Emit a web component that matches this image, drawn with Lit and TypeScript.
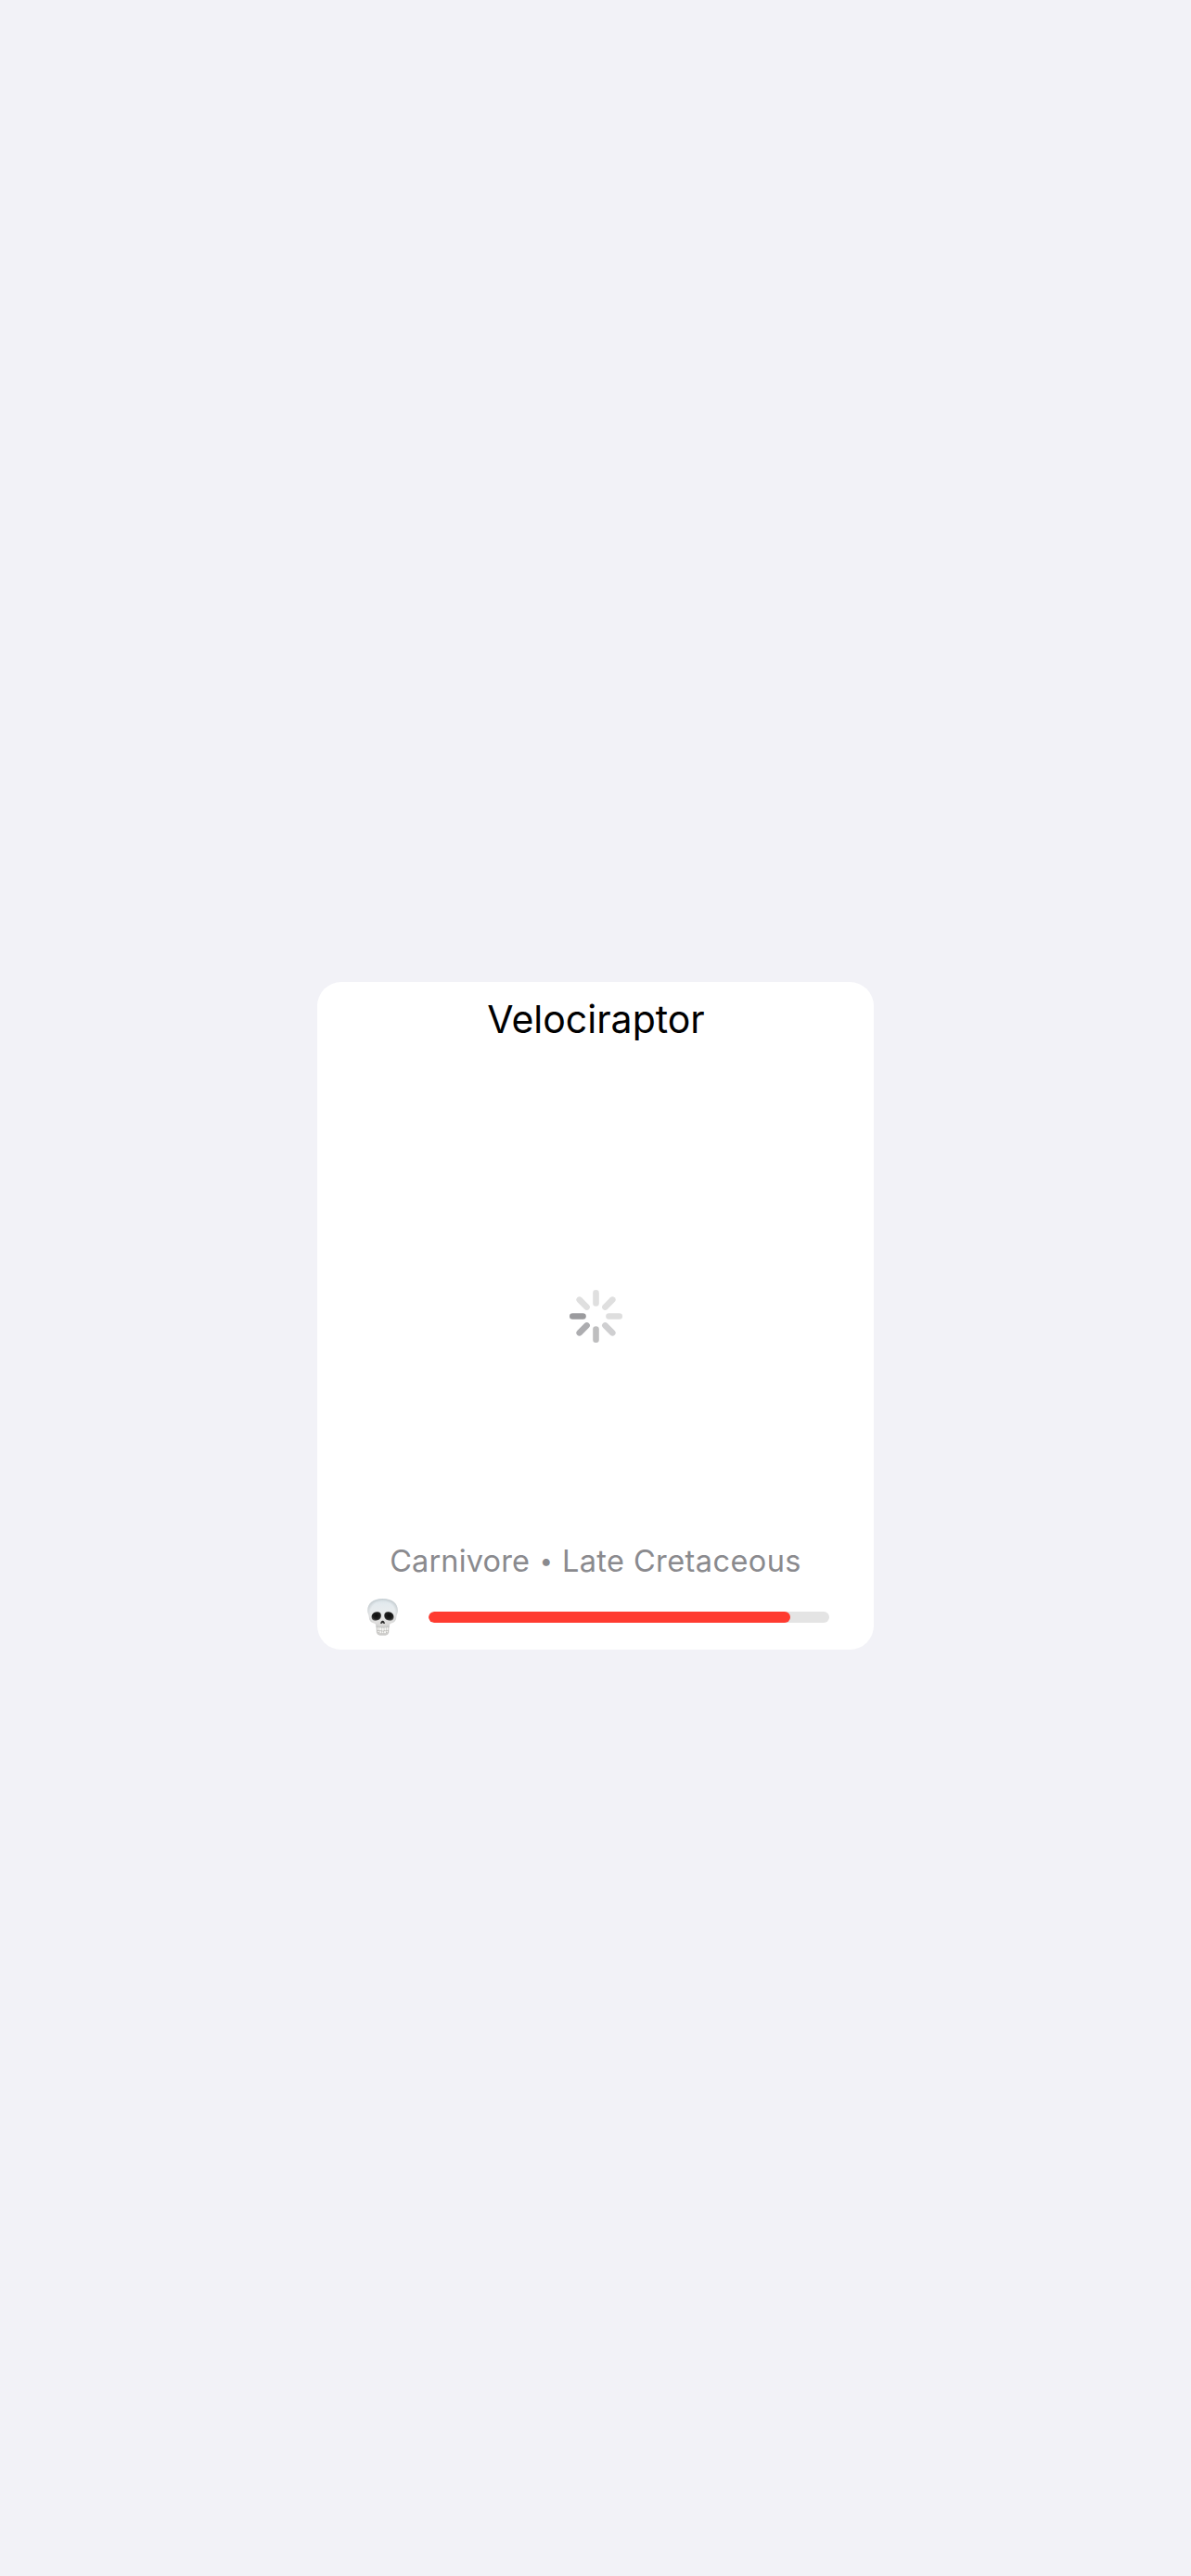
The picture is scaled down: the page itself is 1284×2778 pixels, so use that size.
import { LitElement, html, svg, css } from "lit";
import { customElement, property } from "lit/decorators.js";

@customElement("activity-spinner")
class ActivitySpinner extends LitElement {
  static styles = css`
    :host { display: block; }
    svg { display: block; width: 60px; height: 60px; }
    line { stroke-width: 6.6; stroke-linecap: round; }
  `;

  // Clockwise from twelve o'clock.
  private shades = ["#dfdfdf", "#dfdfdf", "#dedede", "#cfcfd1", "#bebebf", "#adadb0", "#9b9b9e", "#dfdfdf"];

  render() {
    return html`<svg viewBox="-30.5 -30.5 60 60" role="img" aria-label="Loading">
      ${this.shades.map(
        (shade, i) => svg`<line x1="0" y1="-14" x2="0" y2="-25.2" stroke=${shade} transform="rotate(${i * 45})"></line>`
      )}
    </svg>`;
  }
}

@customElement("skull-icon")
class SkullIcon extends LitElement {
  static styles = css`
    :host { display: block; }
    svg { display: block; width: 34px; height: 40px; }
  `;

  render() {
    return html`<svg viewBox="34.3 27 102 120" aria-hidden="true">
      <defs>
        <linearGradient id="bone" x1="0" y1="0" x2="0" y2="1">
          <stop offset="0" stop-color="#d3dde2"></stop>
          <stop offset=".16" stop-color="#e3eaee"></stop>
          <stop offset=".4" stop-color="#e8ecee"></stop>
          <stop offset=".65" stop-color="#e6e6e6"></stop>
          <stop offset="1" stop-color="#d3d2d0"></stop>
        </linearGradient>
        <radialGradient id="edge" cx=".5" cy=".5" r=".58">
          <stop offset=".7" stop-color="#9da5a9" stop-opacity="0"></stop>
          <stop offset="1" stop-color="#8e9598" stop-opacity=".5"></stop>
        </radialGradient>
        <radialGradient id="socket" cx=".5" cy=".42" r=".62">
          <stop offset="0" stop-color="#0c0c0c"></stop>
          <stop offset=".65" stop-color="#202020"></stop>
          <stop offset="1" stop-color="#6a6a6a"></stop>
        </radialGradient>
      </defs>
      <path fill="#cdccca" d="M63 113 Q84 122 105 113 L104 137 Q102 144 93 146 L75 146 Q66 144 64 137 Z"></path>
      <path fill="url(#bone)" d="M84 27 C54 27 35 42 35 65 C35 75 40 80 40 88 C40 98 47 105 58 107 C62 108 62 113 63 119 C69 124 99 124 105 119 C106 113 106 108 110 107 C121 105 128 98 128 88 C128 80 133 75 133 65 C133 42 114 27 84 27 Z"></path>
      <path fill="url(#edge)" d="M84 27 C54 27 35 42 35 65 C35 75 40 80 40 88 C40 98 47 105 58 107 C62 108 62 113 63 119 C69 124 99 124 105 119 C106 113 106 108 110 107 C121 105 128 98 128 88 C128 80 133 75 133 65 C133 42 114 27 84 27 Z"></path>
      <path fill="url(#socket)" d="M65 70 C75 69 80 75 79 84 C78 93 71 98 61 98 C52 98 48 94 48 87 C48 78 54 71 65 70 Z"></path>
      <path fill="url(#socket)" d="M103 70 C93 69 88 75 89 84 C90 93 97 98 107 98 C116 98 120 94 120 87 C120 78 114 71 103 70 Z"></path>
      <path fill="#292929" d="M84 98 C88 98 91 103 91 107 Q88 109 84 105 Q80 109 77 107 C77 103 80 98 84 98 Z"></path>
      <path fill="#b3b2af" d="M65 119 Q84 126 103 119 L102 136 Q84 142 66 136 Z"></path>
      <g fill="#f6f6f4">
        <rect x="66.5" y="120" width="5.4" height="9" rx="2"></rect>
        <rect x="73" y="121" width="6.6" height="9.5" rx="2"></rect>
        <rect x="80.5" y="121.5" width="7.4" height="9.5" rx="2"></rect>
        <rect x="89" y="121" width="6.6" height="9.5" rx="2"></rect>
        <rect x="96.5" y="120" width="5.4" height="9" rx="2"></rect>
        <rect x="67.5" y="130.5" width="5" height="6" rx="2"></rect>
        <rect x="74" y="132" width="6" height="6.5" rx="2"></rect>
        <rect x="81.2" y="132.5" width="5.8" height="6.5" rx="2"></rect>
        <rect x="88.4" y="132" width="6" height="6.5" rx="2"></rect>
        <rect x="95.8" y="130.5" width="5" height="6" rx="2"></rect>
      </g>
    </svg>`;
  }
}

@customElement("danger-meter")
class DangerMeter extends LitElement {
  @property({ type: Number }) value = 0;

  static styles = css`
    :host { display: block; }
    .track { height: 12px; border-radius: 6px; background: #e4e4e4; overflow: hidden; }
    .fill { height: 100%; border-radius: 6px; background: #ff3b30; }
  `;

  render() {
    return html`<div class="track"><div class="fill" style="width:${this.value}%"></div></div>`;
  }
}

@customElement("app-root")
class AppRoot extends LitElement {
  static styles = css`
    :host {
      display: flex;
      align-items: center;
      justify-content: center;
      box-sizing: border-box;
      height: 2778px;
      padding-top: 60px;
      background: #f2f2f7;
      font-family: Inter, "Liberation Sans", sans-serif;
    }
    .card {
      display: flex;
      flex-direction: column;
      box-sizing: border-box;
      width: 600px;
      height: 720px;
      padding: 15px 0;
      border-radius: 26px;
      background: #fff;
    }
    .title {
      margin: 0;
      padding-left: 1px;
      font-size: 41px;
      line-height: 50px;
      font-weight: 400;
      text-align: center;
      color: #000;
    }
    .picture {
      flex: 1;
      display: flex;
      align-items: center;
      justify-content: center;
      padding-top: 50px;
    }
    .facts {
      display: flex;
      justify-content: center;
      align-items: baseline;
      height: 40px;
      font-size: 32.5px;
      line-height: 40px;
      color: #8a8a8e;
      white-space: nowrap;
    }
    .diet { letter-spacing: 0.17px; }
    .era { letter-spacing: 0.41px; }
    .dot {
      position: relative;
      top: -3px;
      margin: 0 10px 0 10.6px;
      font-size: 25px;
    }
    .danger {
      display: flex;
      align-items: center;
      gap: 32px;
      height: 40px;
      margin-top: 20px;
      padding: 0 48px 0 54px;
    }
    danger-meter { flex: 1; }
  `;

  render() {
    return html`
      <div class="card">
        <h1 class="title">Velociraptor</h1>
        <div class="picture"><activity-spinner></activity-spinner></div>
        <div class="facts">
          <span class="diet">Carnivore</span><span class="dot">•</span><span class="era">Late Cretaceous</span>
        </div>
        <div class="danger">
          <skull-icon></skull-icon>
          <danger-meter .value=${90.3}></danger-meter>
        </div>
      </div>
    `;
  }
}
